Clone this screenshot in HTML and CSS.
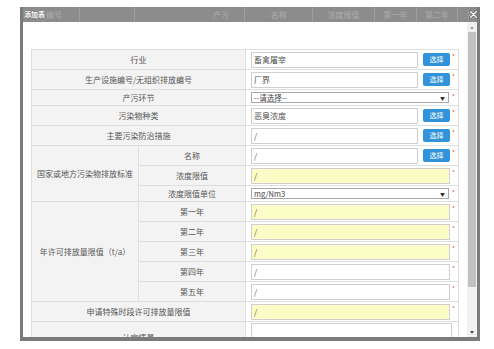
FILE: index.html
```html
<!DOCTYPE html>
<html lang="zh">
<head>
<meta charset="utf-8">
<link rel="stylesheet" href="styles.css">
</head>
<body>
<div class="page">
  <div class="page-head">
    <div class="ph c1">编号</div>
    <div class="ph c2"></div>
    <div class="ph c3">产污</div>
    <div class="ph c4">名称</div>
    <div class="ph c5">浓度限值</div>
    <div class="ph c6">第一年</div>
    <div class="ph c7">第二年</div>
    <div class="ph c8">第三</div>
  </div>
</div>

<div class="dialog">
  <div class="titlebar">
    <span class="title">添加表</span>
    <svg class="close" width="9" height="9" viewBox="0 0 9 9"><path d="M1.5 1.5 L7.5 7.5 M7.5 1.5 L1.5 7.5" stroke="#555" stroke-width="2.6" stroke-linecap="round"/><path d="M1.5 1.5 L7.5 7.5 M7.5 1.5 L1.5 7.5" stroke="#fff" stroke-width="1.4" stroke-linecap="round"/></svg>
  </div>
  <div class="body">
    <div class="scroll">
      <table class="form">
        <colgroup><col class="k1"><col class="k2"><col class="k3"></colgroup>
        <tr class="r20">
          <td class="lab" colspan="2">行业</td>
          <td class="val"><div class="v"><div class="inp">畜禽屠宰</div><div class="btn">选择</div><span class="req">*</span></div></td>
        </tr>
        <tr class="r20">
          <td class="lab" colspan="2">生产设施编号/无组织排放编号</td>
          <td class="val"><div class="v"><div class="inp">厂界</div><div class="btn">选择</div><span class="req">*</span></div></td>
        </tr>
        <tr class="r16">
          <td class="lab" colspan="2">产污环节</td>
          <td class="val"><div class="v"><div class="sel"><span>--请选择--</span><span class="arr">▼</span></div><span class="req">*</span></div></td>
        </tr>
        <tr class="r20">
          <td class="lab" colspan="2">污染物种类</td>
          <td class="val"><div class="v"><div class="inp">恶臭浓度</div><div class="btn">选择</div><span class="req">*</span></div></td>
        </tr>
        <tr class="r20">
          <td class="lab" colspan="2">主要污染防治措施</td>
          <td class="val"><div class="v"><div class="inp">/</div><div class="btn">选择</div><span class="req">*</span></div></td>
        </tr>
        <tr class="r20">
          <td class="lab" rowspan="3">国家或地方污染物排放标准</td>
          <td class="lab">名称</td>
          <td class="val"><div class="v"><div class="inp">/</div><div class="btn">选择</div><span class="req">*</span></div></td>
        </tr>
        <tr class="r20">
          <td class="lab">浓度限值</td>
          <td class="val"><div class="v"><div class="inp y">/</div><span class="req">*</span></div></td>
        </tr>
        <tr class="r16">
          <td class="lab">浓度限值单位</td>
          <td class="val"><div class="v"><div class="sel"><span>mg/Nm3</span><span class="arr">▼</span></div><span class="req">*</span></div></td>
        </tr>
        <tr class="r20">
          <td class="lab" rowspan="5">年许可排放量限值（t/a）</td>
          <td class="lab">第一年</td>
          <td class="val"><div class="v"><div class="inp y">/</div><span class="req">*</span></div></td>
        </tr>
        <tr class="r20">
          <td class="lab">第二年</td>
          <td class="val"><div class="v"><div class="inp y">/</div><span class="req">*</span></div></td>
        </tr>
        <tr class="r20">
          <td class="lab">第三年</td>
          <td class="val"><div class="v"><div class="inp y">/</div><span class="req">*</span></div></td>
        </tr>
        <tr class="r20">
          <td class="lab">第四年</td>
          <td class="val"><div class="v"><div class="inp">/</div><span class="req">*</span></div></td>
        </tr>
        <tr class="r20">
          <td class="lab">第五年</td>
          <td class="val"><div class="v"><div class="inp">/</div><span class="req">*</span></div></td>
        </tr>
        <tr class="r20">
          <td class="lab" colspan="2">申请特殊时段许可排放量限值</td>
          <td class="val"><div class="v"><div class="inp y">/</div><span class="req">*</span></div></td>
        </tr>
        <tr class="r30">
          <td class="lab" colspan="2">认定情景</td>
          <td class="val top"><div class="v"><div class="inp tall"></div></div></td>
        </tr>
      </table>
    </div>
    <div class="scrollbar">
      <div class="sb-btn"><span class="tri up"></span></div>
      <div class="sb-thumb"></div>
      <div class="sb-space"></div>
      <div class="sb-btn"><span class="tri down"></span></div>
    </div>
  </div>
</div>
</body>
</html>
```
FILE: styles.css
```css
* { box-sizing: border-box; }
html, body { margin: 0; padding: 0; background: #fff; }
body {
  width: 494px;
  height: 349px;
  overflow: hidden;
  position: relative;
  font-family: "Noto Sans CJK SC", "Noto Sans", sans-serif;
  font-size: 8px;
  color: #555;
}

/* underlying page */
.page { padding: 7px 0 0 20px; }
.page-head {
  display: flex;
  width: 460px;
  height: 15px;
  background: #c9c9c9;
  color: #f6f6f6;
  line-height: 15px;
  font-size: 8px;
}
.ph { border-right: 1px solid #e2e2e2; white-space: nowrap; overflow: hidden; text-align: center; }
.c1 { width: 60px; text-align: right; padding-right: 17px; }
.c2 { width: 55px; }
.c3 { width: 110px; text-align: left; padding-left: 78px; }
.c4 { width: 68px; }
.c5 { width: 62px; }
.c6 { width: 42px; }
.c7 { width: 41px; }
.c8 { width: 22px; text-align: left; padding-left: 9px; border-right: 0; }

/* dialog layer */
.dialog {
  position: absolute;
  left: 20px;
  top: 7px;
  width: 460px;
  height: 334px;
  border-left: 3px solid #7b7b7b;
  border-right: 3px solid #7b7b7b;
  border-bottom: 4px solid #7b7b7b;
  display: flex;
  flex-direction: column;
}
.titlebar {
  position: relative;
  height: 15px;
  background: rgba(0, 0, 0, 0.3);
  flex: none;
}
.title {
  position: absolute;
  left: 1px;
  top: 0;
  line-height: 15px;
  font-size: 7px;
  font-weight: bold;
  color: #fff;
  text-shadow: 0 0 1px #555;
}
.close { position: absolute; right: -1px; top: 3px; }

.body {
  flex: 1;
  display: flex;
  background: #fff;
  overflow: hidden;
}
.scroll {
  flex: 1;
  overflow: hidden;
  padding: 27px 9px 0 8px;
}

/* form table */
.form {
  width: 427px;
  border-collapse: collapse;
  table-layout: fixed;
}
.k1, .k2 { width: 107px; }
.k3 { width: 213px; }
.form td {
  border: 1px solid #dedede;
  padding: 0;
  white-space: nowrap;
}
.r20 td { height: 20px; }
.r16 td { height: 16px; }
.r30 td { height: 30px; }
.lab {
  background: #f3f3f3;
  text-align: center;
  color: #555;
}
.val { background: #fff; padding: 0 1px 0 5px !important; }
.val.top { vertical-align: top; padding-top: 1px !important; }
.v { display: flex; align-items: center; }
.inp {
  flex: 1;
  min-width: 0;
  height: 16px;
  border: 1px solid #d0d0d0;
  background: #fff;
  padding: 0 2px;
  line-height: 14px;
  color: #555;
  overflow: hidden;
}
.inp.y { background: #fbfcc6; }
.inp.tall { height: 30px; margin-right: 5px; }
.btn {
  width: 27px;
  height: 13px;
  margin-left: 5px;
  background: #3193da;
  color: #fff;
  border-radius: 2px;
  text-align: center;
  line-height: 13px;
  font-size: 7px;
}
.sel {
  flex: 1;
  height: 11px;
  margin-right: 1px;
  border: 1px solid #a9a9a9;
  display: flex;
  justify-content: space-between;
  align-items: center;
  padding: 0 3px 0 2px;
  font-size: 7.5px;
  line-height: 9px;
  color: #444;
}
.arr { font-size: 5px; color: #333; }
.req {
  width: 7px;
  align-self: flex-start;
  margin-top: 1px;
  text-align: center;
  color: #e05050;
  font-size: 6px;
  line-height: 8px;
}

/* scrollbar */
.scrollbar {
  width: 10px;
  flex: none;
  background: #f1f1f1;
  display: flex;
  flex-direction: column;
}
.sb-btn {
  height: 10px;
  display: flex;
  align-items: center;
  justify-content: center;
}
.tri { width: 0; height: 0; border-left: 2px solid transparent; border-right: 2px solid transparent; }
.tri.up { border-bottom: 3px solid #a3a3a3; }
.tri.down { border-top: 3px solid #505050; }
.sb-thumb {
  height: 255px;
  margin: 0 1px;
  background: #c1c1c1;
}
.sb-space { flex: 1; }
```
